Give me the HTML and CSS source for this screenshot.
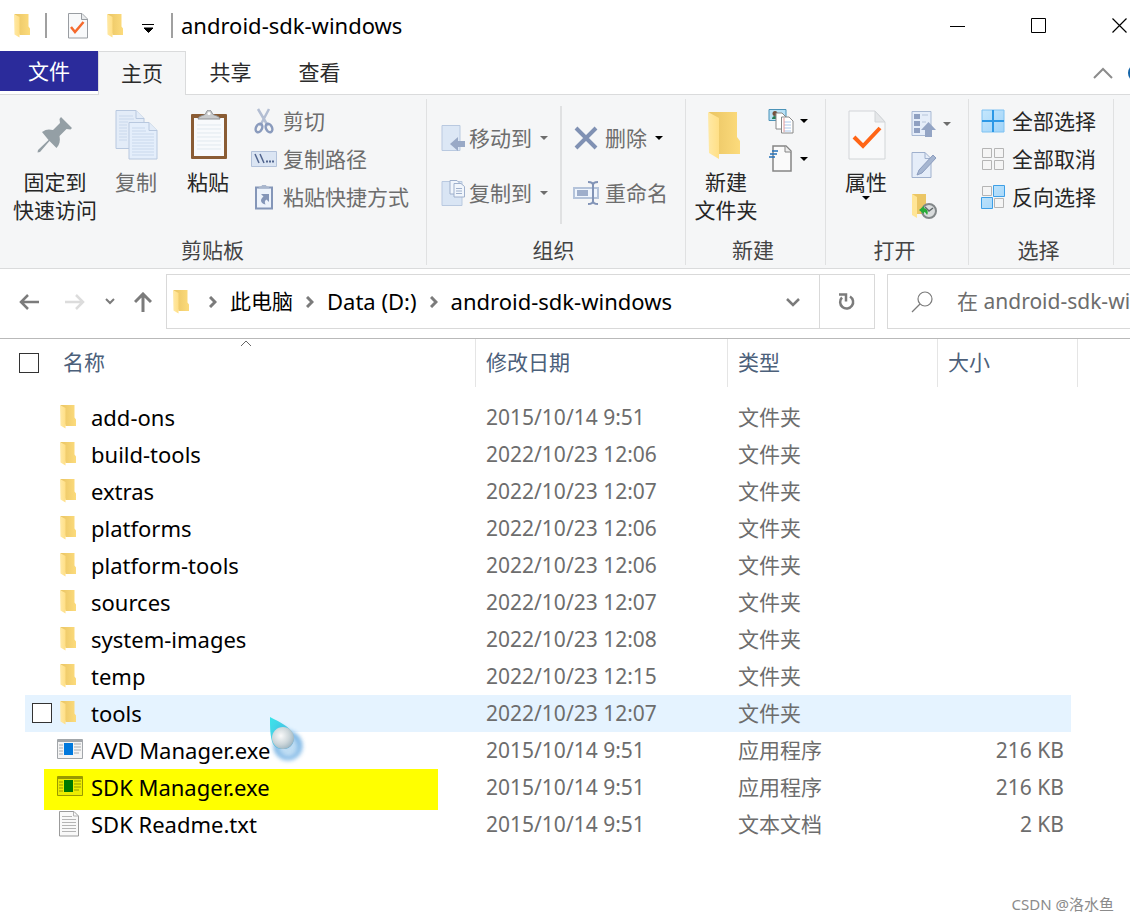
FILE: index.html
```html
<!DOCTYPE html>
<html lang="zh-CN">
<head>
<meta charset="utf-8">
<title>android-sdk-windows</title>
<link rel="stylesheet" href="styles.css">
</head>
<body>
<svg class="defs" aria-hidden="true">
  <defs>
    <linearGradient id="front" x1="0" x2="1"><stop offset="0" stop-color="#ffe9a6"/><stop offset="1" stop-color="#ffdf86"/></linearGradient>
    <linearGradient id="back" x1="0" x2="1"><stop offset="0" stop-color="#eac564"/><stop offset="1" stop-color="#fcdb7c"/></linearGradient>
    <linearGradient id="drop" x1="0" y1="0" x2="1" y2="1"><stop offset="0" stop-color="#19e3e6"/><stop offset="1" stop-color="#4a9fdc"/></linearGradient>
    <radialGradient id="pearl" cx=".4" cy=".4" r=".65"><stop offset="0" stop-color="#fafafa"/><stop offset=".6" stop-color="#ccd6da"/><stop offset="1" stop-color="#9db4c0"/></radialGradient>
    <linearGradient id="tile" x1="0" y1="0" x2="1" y2="1"><stop offset="0" stop-color="#c5e7fd"/><stop offset="1" stop-color="#9fd3f8"/></linearGradient>
    <symbol id="folder" viewBox="0 0 34 50">
      <path d="M2 2h28v25l3 4v13H12z" fill="url(#back)"/>
      <path d="M1 2l11 6v41L2 43z" fill="url(#front)"/>
    </symbol>
    <symbol id="checkdoc" viewBox="0 0 38 50">
      <path d="M1 1h26l10 11v37H1z" fill="#f8f9fa" stroke="#d2d5d8"/>
      <path d="M27 1v11h10z" fill="#e5e7e9" stroke="#d2d5d8"/>
      <path d="M6 27l9 9L32 18" fill="none" stroke="#ff6516" stroke-width="4"/>
    </symbol>
    <symbol id="caret" viewBox="0 0 8 4"><path d="M0 0h8L4 4z" fill="currentColor"/></symbol>
    <symbol id="exe" viewBox="0 0 26 20">
      <path d="M.5.5h25v19H.5z" fill="#f4f4f4" stroke="#a2a6aa"/>
      <path d="M1 1h24v2H1z" fill="#a2a6aa"/>
      <path d="M2 6h4M2 9h4M2 12h4M2 15h4M17 5h7M17 8h7M17 11h7M17 14h5" stroke="#a8acb0"/>
      <path d="M7 4h9v12H7z" fill="#0078dc"/>
    </symbol>
  </defs>
</svg>

<div class="window">
<header class="titlebar">
  <svg class="folder-small"><use href="#folder"/></svg>
  <span class="bar bar-first"></span>
  <button class="quick quick-doc" aria-label="属性"><svg width="20" height="26" viewBox="0 0 20 26"><path d="M.5.5H14l5.500 5.500v19H.5z" fill="#f8f9fa" stroke="#999da2"/><path d="M13.500 1v5.500H19" fill="#e8eaec" stroke="#999da2"/><path d="M3 14l4 5L15.500 9" fill="none" stroke="#f5692c" stroke-width="2.500"/></svg></button>
  <button class="quick" aria-label="新建文件夹"><svg class="folder-small"><use href="#folder"/></svg></button>
  <button class="quick quick-menu" aria-label="自定义"><svg width="12" height="9" viewBox="0 0 12 9"><path d="M0 .5h12M2 4h9L6.500 8.500z" stroke="#000" stroke-width="1"/></svg></button>
  <span class="bar"></span>
  <h1 class="title">android-sdk-windows</h1>
  <div class="controls">
    <button class="control" aria-label="最小化"><svg width="16" height="16"><path d="M0 8.500h15" stroke="#000"/></svg></button>
    <button class="control" aria-label="最大化"><svg width="16" height="16"><path d="M.5.5h14v14H.5z" fill="none" stroke="#000"/></svg></button>
    <button class="control" aria-label="关闭"><svg width="16" height="16"><path d="M.5.5l14 14M14.500.5l-14 14" stroke="#000" stroke-width="1.200"/></svg></button>
  </div>
</header>

<nav class="tabs">
  <button class="tab tab-file">文件</button>
  <button class="tab tab-active">主页</button>
  <button class="tab">共享</button>
  <button class="tab">查看</button>
  <div class="tab-tools">
    <button class="tool" aria-label="折叠功能区"><svg width="20" height="12"><path d="M1 11l9-9 9 9" fill="none" stroke="#8c8c8c" stroke-width="2"/></svg></button>
    <button class="help" aria-label="帮助"></button>
  </div>
</nav>

<section class="ribbon">
  <div class="group g-clip">
    <div class="group-body">
      <button class="big pin"><span class="big-icon"><svg width="36" height="36" viewBox="0 0 36 36"><path d="M24 0l11 11-1.500 1.500-4-.5-7 7c1 5 0 9-3 12l-7-7L3 35l-2.500.5L1 33l10.500-10L5 15c4-3 7-3 11-2l7-7-.5-4z" fill="#949fa5"/></svg></span>固定到<br>快速访问</button>
      <button class="big copy off"><span class="big-icon"><svg width="44" height="50" viewBox="0 0 44 50"><g stroke="#b8c8df" fill="#e3ecf8"><path d="M1 .5h20l8 8v30H1z"/><path d="M21 .5v8h8"/><path d="M14 12.500h20l8 8V49H14z" fill="#e4eefb"/><path d="M34 12.500v8h8"/></g><path d="M4 6h14M4 9h15M4 12h9M4 15h8M4 18h8M4 21h8M4 24h8M4 27h8M4 30h8M17 18h13M17 21h14M17 24h22M17 27h22M17 30h22M17 33h22M17 36h22M17 39h22M17 42h22M17 45h22" stroke="#c9d8ec"/></svg></span>复制</button>
      <button class="big paste"><span class="big-icon"><svg width="38" height="50" viewBox="0 0 38 50"><rect x="1" y="4" width="36" height="45" rx="1" fill="#8a5c34"/><path d="M4 8h30v38H4z" fill="#f8fafc"/><path d="M7 15h24M7 19h24M7 23h24M7 27h24M7 31h24M7 35h24M7 39h24" stroke="#e1e9ef"/><path d="M8 9c1-4 7-3 8-6 1-4 5-4 6 0 1 3 7 2 8 6z" fill="#c9cbcd" stroke="#8e9195"/><circle cx="19" cy="3.500" r="1.500" fill="#fff"/></svg></span>粘贴</button>
      <div class="small-list">
        <button class="small off"><span class="icon"><svg width="20" height="26" viewBox="0 0 20 26"><g fill="none" stroke="#8a9bbd"><path d="M4 1l10 17M15 1L6 18" stroke="#b3bed3" stroke-width="2.500"/><ellipse cx="5" cy="20" rx="3" ry="4.500" stroke-width="2.500" transform="rotate(25 5 20)"/><ellipse cx="15" cy="20" rx="3" ry="4.500" stroke-width="2.500" transform="rotate(-25 15 20)"/></g></svg></span>剪切</button>
        <button class="small off"><span class="icon"><svg width="26" height="16" viewBox="0 0 26 16"><path d="M.5.5h25v15H.5z" fill="#dbe5f3" stroke="#b3c2da"/><path d="M4 3l4 9M9 3l4 9" stroke="#52668f" stroke-width="1.500"/><path d="M15 10.500h2m1 0h2m1 0h2" stroke="#52668f" stroke-width="2"/></svg></span>复制路径</button>
        <button class="small off"><span class="icon"><svg width="20" height="26" viewBox="0 0 20 26"><path d="M2 3.500h16v21H2z" fill="#edf3fb" stroke="#8496b8" stroke-width="2"/><path d="M4 4.500C5 2 8 3 8 1h4c0 2 3 1 4 3.500z" fill="#aab7cd"/><path d="M7 10h8v8l-2.500-2.500c-2 1-2 3-1 5-5-1-6-5-2-8z" fill="#8496b8"/></svg></span>粘贴快捷方式</button>
      </div>
    </div>
    <div class="caption">剪贴板</div>
  </div>

  <div class="group g-org">
    <div class="group-body">
      <div class="wide-list">
        <button class="small off"><span class="icon"><svg width="24" height="26" viewBox="0 0 24 26"><path d="M1 .5h18v25H1z" fill="#dce7f5" stroke="#b9c9e0"/><path d="M9 19l8-7v4h7v6h-7v4z" fill="#99a9c6"/></svg></span>移动到<svg class="caret"><use href="#caret"/></svg></button>
        <button class="small off"><span class="icon"><svg width="24" height="26" viewBox="0 0 24 26"><path d="M1 1.500h20v24H1z" fill="#d9e5f4" stroke="#b9c9e0"/><g fill="#f1f6fc" stroke="#9fb0cc"><path d="M9 .5h7l3 3V14H9z"/><path d="M13 3.500h7l3.500 3V17H13z"/></g><path d="M15 8.500h6M15 11h6M15 13.500h6" stroke="#9fb0cc"/></svg></span>复制到<svg class="caret"><use href="#caret"/></svg></button>
      </div>
      <span class="divider"></span>
      <div class="wide-list">
        <button class="small off"><span class="icon"><svg width="24" height="24"><path d="M2 2l20 20M22 2L2 22" stroke="#8091b3" stroke-width="4"/></svg></span><span class="label">删除</span><svg class="caret black"><use href="#caret"/></svg></button>
        <button class="small off"><span class="icon"><svg width="26" height="24" viewBox="0 0 26 24"><path d="M1 7h24v10H1z" fill="#eff5fd" stroke="#b4c3da" stroke-width="2"/><path d="M4 9h11v6H4z" fill="#9eaecb"/><path d="M15 1c3 0 5 1 5 3v16c0 2-2 3-5 3M25 1c-3 0-5 1-5 3M20 20c0 2 2 3 5 3" fill="none" stroke="#8193b6" stroke-width="2"/></svg></span><span class="label">重命名</span></button>
      </div>
    </div>
    <div class="caption">组织</div>
  </div>

  <div class="group g-new">
    <div class="group-body">
      <button class="big newfolder"><span class="big-icon"><svg width="36" height="50"><use href="#folder"/></svg></span>新建<br>文件夹</button>
      <div class="small-list">
        <button class="small" aria-label="新建项目"><span class="icon"><svg width="26" height="26" viewBox="0 0 26 26"><path d="M1 1.500h17v11H1z" fill="#b9e1f6" stroke="#4b93b8"/><path d="M4 11c0-4 6-4 6 0z" fill="#237d57"/><circle cx="7" cy="5.500" r="2.500" fill="#75513d"/><path d="M8 5h6l4 4v12H8z" fill="#fff" stroke="#888"/><path d="M13.500 9H21l4 4v12H13.500z" fill="#fff" stroke="#888"/><path d="M16 14h7M16 17h7M16 20h7M16 23h7" stroke="#aac7eb"/><path d="M16 10v14" stroke="#e69a9a"/></svg></span><svg class="caret black"><use href="#caret"/></svg></button>
        <button class="small" aria-label="轻松访问"><span class="icon"><svg width="26" height="28" viewBox="0 0 26 28"><path d="M5 1h13l5 5v20H5z" fill="#fafafa" stroke="#858585" stroke-width="1.500"/><path d="M17 1v6h6" fill="#eee" stroke="#858585"/><path d="M4 6h6M2 9h7M1 12h6" stroke="#2472b9" stroke-width="1.500"/></svg></span><svg class="caret black"><use href="#caret"/></svg></button>
      </div>
    </div>
    <div class="caption">新建</div>
  </div>

  <div class="group g-open">
    <div class="group-body">
      <button class="big prop"><span class="big-icon"><svg width="38" height="50"><use href="#checkdoc"/></svg></span>属性<svg class="caret black"><use href="#caret"/></svg></button>
      <div class="open-list">
        <button class="small off" aria-label="打开"><span class="icon"><svg width="26" height="28" viewBox="0 0 26 28"><path d="M1 1.500h19v24H1z" fill="#e5edf9" stroke="#a9b9d3"/><path d="M3 4h6v5H3zM3 11h6v5H3zM3 18h6v5H3z" fill="#8fa0c1"/><path d="M11 5h6M11 12h4" stroke="#b7c5da"/><path d="M17.500 12l7.500 8h-4v7h-7v-7h-4z" fill="#93a4c4"/></svg></span><svg class="caret"><use href="#caret"/></svg></button>
        <button class="small off" aria-label="编辑"><span class="icon"><svg width="26" height="26" viewBox="0 0 26 26"><path d="M1 .5h13l6 6v19H1z" fill="#e5edf9" stroke="#9fb0cd"/><path d="M14 .5v6h6" fill="none" stroke="#9fb0cd"/><path d="M6 23l2-5L22 3l3 3-14 15z" fill="#a6b6d1" stroke="#8c9dbe"/></svg></span></button>
        <button class="small" aria-label="历史记录"><span class="icon"><svg width="26" height="26" viewBox="0 0 26 26"><path d="M1 1h14v20H5z" fill="#ebc665"/><path d="M1 1l5 3v21l-5-3z" fill="#ffe596"/><circle cx="18" cy="18" r="7" fill="#d9dcdd" stroke="#828789" stroke-width="2"/><path d="M14 14l4 4 4-3" fill="none" stroke="#62696b" stroke-width="1.500"/><path d="M8 17l5-4v2c3 1 5 4 3 7-1-2-2-3-3-3v2z" fill="#27ad37"/></svg></span></button>
      </div>
    </div>
    <div class="caption">打开</div>
  </div>

  <div class="group g-select">
    <div class="group-body">
      <div class="small-list">
        <button class="small"><span class="icon"><svg width="24" height="24" viewBox="0 0 24 24"><path d="M1 1h22v22H1z" fill="url(#tile)" stroke="#7fc2f2"/><path d="M12 1v22M1 12h22" stroke="#2c98e6" stroke-width="2"/></svg></span>全部选择</button>
        <button class="small"><span class="icon"><svg width="24" height="24" viewBox="0 0 24 24"><path d="M1.500 1.500h9v9h-9zM13.500 1.500h9v9h-9zM1.500 13.500h9v9h-9zM13.500 13.500h9v9h-9z" fill="#f5f5f5" stroke="#b5b5b5"/></svg></span>全部取消</button>
        <button class="small"><span class="icon"><svg width="24" height="24" viewBox="0 0 24 24"><path d="M1.500 1.500h9v9h-9zM13.500 13.500h9v9h-9z" fill="#f5f5f5" stroke="#b5b5b5"/><path d="M12.500.5h11v11h-11zM.5 12.500h11v11H.5z" fill="url(#tile)" stroke="#3e9fe6"/></svg></span>反向选择</button>
      </div>
    </div>
    <div class="caption">选择</div>
  </div>
</section>

<section class="navbar">
  <div class="history">
    <button class="nav" aria-label="后退"><svg width="20" height="16"><path d="M20 8H2M9 1L2 8l7 7" fill="none" stroke="#7b7b7b" stroke-width="2.500"/></svg></button>
    <button class="nav" aria-label="前进"><svg width="20" height="16"><path d="M0 8h18M11 1l7 7-7 7" fill="none" stroke="#dcdcdc" stroke-width="2.500"/></svg></button>
    <button class="nav nav-recent" aria-label="最近"><svg width="10" height="8"><path d="M1 1l4 4 4-4" fill="none" stroke="#7b7b7b" stroke-width="2"/></svg></button>
    <button class="nav nav-up" aria-label="上移"><svg width="18" height="20"><path d="M9 20V2M1 10l8-8 8 8" fill="none" stroke="#7b7b7b" stroke-width="3"/></svg></button>
  </div>
  <div class="address">
    <svg class="folder-small"><use href="#folder"/></svg>
    <svg class="chev"><path d="M1 1l5 5-5 5"/></svg>
    <a href="#" class="crumb">此电脑</a>
    <svg class="chev"><path d="M1 1l5 5-5 5"/></svg>
    <a href="#" class="crumb latin">Data (D:)</a>
    <svg class="chev"><path d="M1 1l5 5-5 5"/></svg>
    <a href="#" class="crumb latin">android-sdk-windows</a>
    <button class="drop" aria-label="历史地址"><svg width="14" height="10"><path d="M1 2l6 6 6-6" fill="none" stroke="#7b7b7b" stroke-width="2.500"/></svg></button>
    <button class="refresh" aria-label="刷新"><svg width="18" height="18" viewBox="0 0 18 18"><path d="M12 3.500A6.500 6.500 0 1 1 4 4.500" fill="none" stroke="#7b7b7b" stroke-width="2.500"/><path d="M1 1.500h7v7" fill="none" stroke="#7b7b7b" stroke-width="2.500"/></svg></button>
  </div>
  <label class="search">
    <svg width="22" height="22"><circle cx="14" cy="8" r="7" fill="none" stroke="#7b7b7b" stroke-width="1.200"/><path d="M9 13l-8 8" stroke="#7b7b7b" stroke-width="1.200"/></svg>
    <input type="text" class="search-input" placeholder="在 android-sdk-windows" aria-label="搜索">
  </label>
</section>

<main class="files">
<table class="list">
  <colgroup><col class="c-pick"><col><col class="c-date"><col class="c-type"><col class="c-size"></colgroup>
  <thead>
    <tr>
      <th class="pick-all"><input type="checkbox" class="check" aria-label="全选"></th>
      <th class="name-head">名称<svg class="sort" width="12" height="7"><path d="M1 6l5-5 5 5" fill="none" stroke="#666"/></svg></th>
      <th>修改日期</th><th>类型</th><th>大小</th>
    </tr>
  </thead>
  <tbody>
    <tr><td></td><td class="name"><svg class="file-icon folder-small"><use href="#folder"/></svg>add-ons</td><td>2015/10/14 9:51</td><td>文件夹</td><td></td></tr>
    <tr><td></td><td class="name"><svg class="file-icon folder-small"><use href="#folder"/></svg>build-tools</td><td>2022/10/23 12:06</td><td>文件夹</td><td></td></tr>
    <tr><td></td><td class="name"><svg class="file-icon folder-small"><use href="#folder"/></svg>extras</td><td>2022/10/23 12:07</td><td>文件夹</td><td></td></tr>
    <tr><td></td><td class="name"><svg class="file-icon folder-small"><use href="#folder"/></svg>platforms</td><td>2022/10/23 12:06</td><td>文件夹</td><td></td></tr>
    <tr><td></td><td class="name"><svg class="file-icon folder-small"><use href="#folder"/></svg>platform-tools</td><td>2022/10/23 12:06</td><td>文件夹</td><td></td></tr>
    <tr><td></td><td class="name"><svg class="file-icon folder-small"><use href="#folder"/></svg>sources</td><td>2022/10/23 12:07</td><td>文件夹</td><td></td></tr>
    <tr><td></td><td class="name"><svg class="file-icon folder-small"><use href="#folder"/></svg>system-images</td><td>2022/10/23 12:08</td><td>文件夹</td><td></td></tr>
    <tr><td></td><td class="name"><svg class="file-icon folder-small"><use href="#folder"/></svg>temp</td><td>2022/10/23 12:15</td><td>文件夹</td><td></td></tr>
    <tr class="hot"><td class="pick"><input type="checkbox" class="check" aria-label="tools"></td><td class="name"><svg class="file-icon folder-small"><use href="#folder"/></svg>tools<svg class="pointer" width="40" height="52" viewBox="0 0 40 52"><path d="M8 8c12 5 24 12 24 22a13 13 0 0 1-24 4z" fill="#4ba0de" opacity=".35" class="glow"/><circle cx="20" cy="31" r="12" fill="none" stroke="#539fdd" stroke-width="5" opacity=".7" class="glow"/><path d="M2 2c10 5 20 10 23 17 3 9-3 16-11 15-4 0-7-2-9-5C2 22 2 12 2 2z" fill="url(#drop)" opacity=".85"/><circle cx="15" cy="23" r="11" fill="url(#pearl)"/></svg></td><td>2022/10/23 12:07</td><td>文件夹</td><td></td></tr>
    <tr><td></td><td class="name"><svg class="file-icon" width="26" height="20"><use href="#exe"/></svg>AVD Manager.exe</td><td>2015/10/14 9:51</td><td>应用程序</td><td class="size">216 KB</td></tr>
    <tr><td></td><td class="name marked"><svg class="file-icon" width="26" height="20" viewBox="0 0 26 20"><path d="M.5.5h25v19H.5z" fill="#eded00" stroke="#999900"/><path d="M1 1h24v2H1z" fill="#999900"/><path d="M2 6h4M2 9h4M2 12h4M2 15h4M17 5h7M17 8h7M17 11h7M17 14h5" stroke="#999900"/><path d="M7 4h9v12H7z" fill="#007800"/></svg>SDK Manager.exe</td><td>2015/10/14 9:51</td><td>应用程序</td><td class="size">216 KB</td></tr>
    <tr><td></td><td class="name"><svg class="file-icon text-icon" width="20" height="26" viewBox="0 0 20 26"><path d="M.5.5H15l4.500 4.500v20H.5z" fill="#f9f9f9" stroke="#9b9b9b"/><path d="M14.500.5V5h5M3 5.500h10M3 8.500h14M3 11.500h14M3 14.500h14M3 17.500h14M3 20.500h14" fill="none" stroke="#b4b4b4"/></svg>SDK Readme.txt</td><td>2015/10/14 9:51</td><td>文本文档</td><td class="size">2 KB</td></tr>
  </tbody>
</table>
</main>
<footer class="credit">CSDN @洛水鱼</footer>
</div>
</body>
</html>
```

FILE: styles.css
```css
* { box-sizing: border-box; }
body {
  margin: 0;
  background: #fff;
  color: #000;
  font: 21px/28px "Noto Sans", "Noto Sans CJK SC", sans-serif;
  overflow-x: hidden;
}
button {
  margin: 0;
  padding: 0;
  border: 0;
  background: none;
  color: inherit;
  font: inherit;
}
svg { flex: none; display: block; }
.defs { position: absolute; width: 0; height: 0; }
.window { display: flex; flex-direction: column; min-height: 100vh; overflow: hidden; }
.folder-small { width: 18px; height: 25px; }

/* title bar */
.titlebar { display: flex; align-items: center; height: 51px; padding-left: 13px; }
.bar { width: 2px; height: 25px; background: #a0a0a0; }
.bar-first { margin: 0 21px 0 14px; }
.quick { margin-right: 18px; }
.quick-menu { margin: 6px 17px 0 0; }
.title { margin: 0; padding: 0 0 2px 8px; font-size: 22px; font-weight: 400; }
.controls { display: flex; align-self: stretch; margin: 0 -30px 0 auto; }
.control { display: flex; align-items: center; justify-content: center; width: 81px; }

/* tabs */
.tabs { display: flex; height: 44px; border-bottom: 1px solid #dadbdc; }
.tab { width: 89px; height: 43px; padding-bottom: 2px; color: #2b2b2b; }
.tab-file { width: 98px; height: 40px; padding-bottom: 0; background: #2b2b9b; color: #fff; }
.tab-active { width: 88px; height: 44px; border: 1px solid #dadbdc; border-bottom: 0; background: #f5f6f7; }
.tab-tools { display: flex; align-items: center; gap: 15px; margin: 0 -16px 0 auto; }
.help { width: 18px; height: 18px; border-radius: 50%; background: #1464a8; }

/* ribbon */
.ribbon { display: flex; height: 174px; padding: 4px 0 3px; border-bottom: 1px solid #dadbdc; background: #f5f6f7; }
.group { display: flex; flex: none; flex-direction: column; border-right: 1px solid #e0e1e2; color: #262626; }
.group-body { display: flex; flex: 1; align-items: flex-start; }
.caption { height: 29px; padding-right: 5px; color: #444; text-align: center; }
.g-clip { width: 427px; padding-left: 8px; }
.g-org { width: 259px; padding-left: 13px; }
.g-new { width: 140px; }
.g-open { width: 143px; }
.g-select { width: 145px; }
.g-clip .caption { padding-right: 9px; }
.g-org .caption { padding-right: 18px; }
.off { color: #6d6d6d; }
.big { display: flex; flex-direction: column; align-items: center; margin-top: 10px; }
.big-icon { display: flex; align-items: center; height: 52px; margin-bottom: 7px; }
.pin { width: 94px; }
.copy { width: 68px; }
.paste { width: 76px; }
.newfolder { width: 80px; margin-right: 2px; }
.newfolder .big-icon { margin-right: 4px; }
.prop { width: 80px; }
.copy .big-icon, .paste .big-icon, .prop .big-icon { padding-left: 2px; }
.small-list, .wide-list, .open-list { display: flex; flex-direction: column; }
.small-list { padding: 3px 0 0 5px; }
.wide-list { padding-top: 11px; }
.g-new .small-list { padding-left: 0; }
.g-select .small-list { padding-left: 11px; }
.open-list { padding: 4px 0 0 5px; }
.small { display: flex; align-items: center; gap: 6px; height: 38px; white-space: nowrap; }
.wide-list .small { gap: 3px; height: 55px; }
.wide-list .label { padding-left: 3px; }
.open-list .small { height: 41px; }
.icon { display: flex; align-items: center; justify-content: center; width: 26px; }
.caret { width: 8px; height: 4px; }
.wide-list .caret { margin-left: 5px; }
.black { color: #000; }
.divider { width: 2px; height: 118px; margin: 7px 11px 0 12px; background: #e0e1e2; }

/* navigation bar */
.navbar { display: flex; align-items: center; height: 70px; padding-bottom: 4px; border-bottom: 1px solid #b9b9b9; }
.history { display: flex; align-items: center; width: 166px; padding-left: 19px; gap: 26px; }
.nav-recent { margin-left: -6px; }
.nav-up { margin-left: -7px; }
.address { display: flex; flex: 1; align-items: center; height: 55px; padding-left: 5px; border: 1px solid #d9d9d9; white-space: nowrap; }
.chev { width: 8px; height: 12px; margin: 0 13px; fill: none; stroke: #7b7b7b; stroke-width: 3; }
.address .folder-small + .chev { margin-left: 19px; }
.crumb { padding-bottom: 2px; color: #000; text-decoration: none; }
.latin { font-size: 22px; }
.drop { margin: 0 19px 0 auto; }
.refresh { display: flex; align-items: center; justify-content: center; align-self: stretch; width: 55px; border-left: 1px solid #d9d9d9; }
.search { display: flex; align-items: center; width: 243px; height: 55px; margin-left: 12px; padding-left: 23px; gap: 24px; border: 1px solid #d9d9d9; border-right: 0; }
.search-input { flex: 1; min-width: 0; padding: 0 0 2px; border: 0; outline: 0; background: none; font: inherit; }
.search-input::placeholder { color: #6d6d6d; opacity: 1; }

/* file list */
.files { flex: 1; padding-right: 52px; }
.list { width: 100%; border-collapse: separate; border-spacing: 0; table-layout: fixed; color: #6d6d6d; }
.c-pick { width: 56px; }
.c-date { width: 252px; }
.c-type { width: 210px; }
.c-size { width: 140px; }
th { position: relative; height: 48px; padding: 0 0 2px 10px; border-right: 1px solid #e5e5e5; color: #4c607a; font-weight: 400; text-align: left; }
.pick-all { padding: 0 0 0 19px; border-right: 0; }
.name-head { padding-left: 7px; }
.sort { position: absolute; top: 1px; left: 44%; }
tbody::before { content: ""; display: block; height: 12px; }
td { height: 37px; padding: 0 0 2px 10px; }
.name { position: relative; padding-left: 35px; color: #000; font-size: 22px; }
.file-icon { position: absolute; top: 7px; left: 1px; }
.folder-small.file-icon, .text-icon { top: 5px; left: 3px; }
.size { padding-right: 14px; text-align: right; }
.check { display: block; width: 20px; height: 20px; margin: 0; appearance: none; border: 1px solid #333; background: #fff; }
.pick { padding: 0 0 2px 32px; }
.hot { background: linear-gradient(#e5f3ff, #e5f3ff) no-repeat 25px 0 / calc(100% - 32px) 100%; }
.marked { z-index: 0; }
.marked::before { content: ""; position: absolute; z-index: -1; top: 0; right: 38px; bottom: -4px; left: -12px; background: #ff0; }
.pointer { position: absolute; z-index: 1; top: 20px; left: 212px; overflow: visible; }
.glow { filter: blur(2px); }

.credit { padding: 0 16px 5px; color: #8b8b8b; font-size: 15px; line-height: 24px; text-align: right; }
```
